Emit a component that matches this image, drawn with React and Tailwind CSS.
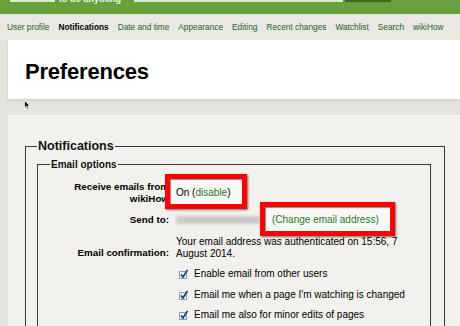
import React from 'react';

const navItems = [
  { label: 'User profile' },
  { label: 'Notifications', active: true },
  { label: 'Date and time' },
  { label: 'Appearance' },
  { label: 'Editing' },
  { label: 'Recent changes' },
  { label: 'Watchlist' },
  { label: 'Search' },
  { label: 'wikiHow' },
];

const checks = [
  'Enable email from other users',
  "Email me when a page I'm watching is changed",
  'Email me also for minor edits of pages',
];

function CheckIcon() {
  return (
    <svg width="10" height="10" viewBox="0 0 10 10" className="shrink-0">
      <rect x="0.5" y="2.5" width="7" height="7" fill="#e8eef6" stroke="#8aa0bd" />
      <path d="M2 5.5 L4 8 L8.5 0.8" fill="none" stroke="#1d3b6b" strokeWidth="1.6" />
    </svg>
  );
}

function RedBox({ className }) {
  // annotation frame drawn over the form
  return (
    <div
      className={`absolute border-[5px] border-[#ff0000] bg-[#f8f8f6] shadow-[1px_1px_2px_rgba(0,0,0,0.55),inset_1px_1px_1px_rgba(0,40,60,0.5)] ${className}`}
    />
  );
}

function App() {
  return (
    <div className="w-[460px] h-[326px] overflow-hidden flex flex-col bg-[#e5e3de] font-['Liberation_Sans',Arial,sans-serif] text-black">
      {/* top green bar */}
      <div className="h-[14px] shrink-0 bg-[#66a13c] flex items-start overflow-hidden">
        <div className="ml-[10px] w-[45px] h-[2px] bg-[#dbe9cf]" />
        <span className="ml-[4px] -mt-[5px] text-[9px] leading-[9px] font-bold text-[#f2f7ec]">to do anything</span>
        <div className="ml-[13px] w-[209px] h-[2px] bg-[#dbe9cf]" />
        <div className="ml-[2px] w-[46px] h-[2px] bg-[#3c6a24]" />
      </div>

      {/* preference tabs */}
      <div className="h-[26px] shrink-0 bg-[#e9e8e3] flex items-center pl-[7px] gap-[9px] text-[8.3px] whitespace-nowrap">
        {navItems.map((item) => (
          <span key={item.label} className={item.active ? 'font-bold text-black' : 'text-[#1a661a]'}>
            {item.label}
          </span>
        ))}
      </div>

      {/* page title */}
      <div className="ml-[8px] h-[59px] shrink-0 bg-white flex items-center pl-[17px] pt-[3px] shadow-[0_1px_3px_rgba(0,0,0,0.12)]">
        <h1 className="text-[22px] font-bold tracking-[-0.2px]">Preferences</h1>
      </div>

      {/* grey band with pointer */}
      <div className="h-[16px] shrink-0 pl-[24px] pt-[1px]">
        <svg width="7" height="10" viewBox="0 0 7 10">
          <path d="M0.5 0.5 L0.5 8 L2.3 6.3 L3.6 9.3 L4.8 8.8 L3.6 5.9 L6 5.9 Z" fill="#111" stroke="#fff" strokeWidth="0.7" />
        </svg>
      </div>

      {/* content */}
      <div className="ml-[8px] flex-1 bg-[#f2f1ee] pt-[24px] pl-[17px] pr-[15px]">
        <fieldset className="border border-[#3a3a3a] pl-[11px] pr-[13px] pt-[4px] h-[200px]">
          <legend className="px-[1px] text-[12.5px] leading-[15px] font-bold text-[#111]">Notifications</legend>

          <fieldset className="border border-[#3a3a3a] ml-0 pl-[12px] pt-[10px] h-[200px]">
            <legend className="px-[1px] text-[10px] leading-[13px] font-bold text-[#111]">Email options</legend>

            <div className="grid grid-cols-[119px_1fr] gap-x-[7px] text-[10px]">
              {/* receive emails */}
              <div className="text-right font-bold text-[9.8px] leading-[12px]">
                Receive emails from
                <br />
                wikiHow
              </div>
              <div className="flex items-center">
                <span className="relative leading-[12px]">
                  <RedBox className="-left-[11px] -top-[13px] w-[82px] h-[35px]" />
                  <span className="relative">
                    On (<span className="text-[#1f7a1f]">disable</span>)
                  </span>
                </span>
              </div>

              {/* send to */}
              <div className="mt-[9px] text-right font-bold text-[9.8px] leading-[12px]">Send to:</div>
              <div className="mt-[9px] flex items-center">
                <div className="w-[84px] h-[8px] bg-[#cbc9c5] blur-[1.5px] rounded-[2px]" />
                <span className="relative ml-[12px] leading-[12px]">
                  <RedBox className="-left-[12px] -top-[12px] w-[135px] h-[34px]" />
                  <span className="relative text-[#1f7a1f]">(Change email address)</span>
                </span>
              </div>

              {/* confirmation */}
              <div className="mt-[10px] self-center text-right font-bold text-[9.8px] leading-[12px] pt-[10px]">Email confirmation:</div>
              <div className="mt-[10px] leading-[11.5px] whitespace-nowrap">
                Your email address was authenticated on 15:56, 7
                <br />
                August 2014.
              </div>

              {/* options */}
              <div />
              <div className="mt-[9px] flex flex-col gap-[8.5px] pl-[3px]">
                {checks.map((c) => (
                  <div key={c} className="flex items-center gap-[5px] leading-[12px] whitespace-nowrap">
                    <CheckIcon />
                    <span>{c}</span>
                  </div>
                ))}
              </div>
            </div>
          </fieldset>
        </fieldset>
      </div>
    </div>
  );
}

export default App;
